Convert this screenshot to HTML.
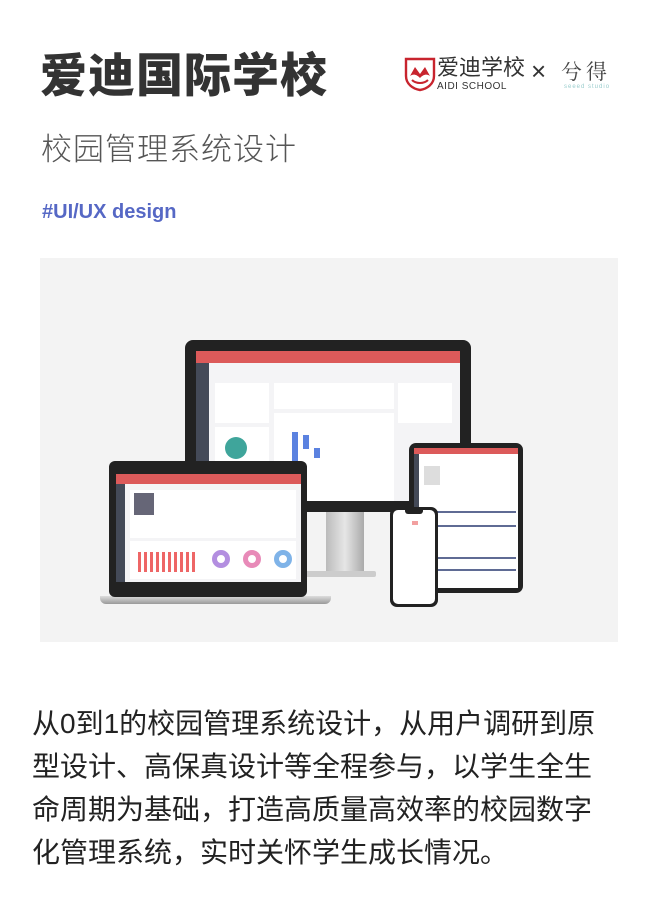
<!DOCTYPE html>
<html><head><meta charset="utf-8"><style>
*{margin:0;padding:0;box-sizing:border-box}
body{width:648px;height:900px;background:#fff;font-family:"Liberation Sans","Noto Sans CJK SC",sans-serif;position:relative;overflow:hidden;color:#333}
.a{position:absolute}
h1{position:absolute;left:40px;top:44px;font-size:47px;font-weight:900;color:#333;letter-spacing:1px;line-height:64px;white-space:nowrap}
.sub{left:41px;top:130px;font-size:31px;color:#555;line-height:40px;font-weight:300;white-space:nowrap;letter-spacing:1px}
.tag{left:42px;top:201px;font-size:20px;font-weight:700;color:#5668c5}
.para{left:32px;top:702px;width:610px;font-size:28px;line-height:43px;color:#222;white-space:nowrap}
.img{left:40px;top:258px;width:578px;height:384px;background:#f3f3f3}
.scr{background:#f4f4f6}
.red{background:#dc5a5a}
</style></head><body>
<h1>爱迪国际学校</h1>
<div class="a sub">校园管理系统设计</div>
<div class="a tag">#UI/UX design</div>

<svg class="a" style="left:404px;top:56px" width="32" height="36" viewBox="0 0 32 36">
<path d="M2 3h28v17c0 8-7 13-14 14C9 33 2 28 2 20z" fill="none" stroke="#c8242e" stroke-width="2.4"/>
<path d="M6 20l5-9 5 7 5-7 5 9c-3-2-6-2-10 2-4-4-7-4-10-2z" fill="#c8242e"/>
<path d="M8 24c4 4 12 4 16 0" stroke="#c8242e" stroke-width="2" fill="none"/>
</svg>
<div class="a" style="left:437px;top:55px;font-size:22px;color:#333;line-height:26px">爱迪学校</div>
<div class="a" style="left:437px;top:81px;font-size:10px;color:#333;letter-spacing:.5px">AIDI SCHOOL</div>
<div class="a" style="left:531px;top:56px;font-size:26px;color:#333;line-height:30px">×</div>
<div class="a" style="left:561px;top:56px;font-size:21px;color:#444;letter-spacing:4px;font-family:'Noto Serif CJK SC',serif">兮得</div>
<div class="a" style="left:564px;top:84px;font-size:6px;color:#9cc;letter-spacing:1px">seeed studio</div>

<div class="a img"></div>
<div class="a" style="left:326px;top:510px;width:38px;height:64px;background:linear-gradient(90deg,#bbb,#e6e6e6,#aaa)"></div>
<div class="a" style="left:300px;top:571px;width:76px;height:6px;background:#ccc;border-radius:2px"></div>
<div class="a" style="left:185px;top:340px;width:286px;height:172px;background:#222;border-radius:8px"></div>
<div class="a scr" style="left:196px;top:351px;width:264px;height:150px"></div>
<div class="a red" style="left:196px;top:351px;width:264px;height:12px"></div>
<div class="a" style="left:196px;top:363px;width:13px;height:138px;background:#444a58"></div>
<div class="a" style="left:215px;top:383px;width:54px;height:40px;background:#fff"></div>
<div class="a" style="left:274px;top:383px;width:120px;height:26px;background:#fff"></div>
<div class="a" style="left:398px;top:383px;width:54px;height:40px;background:#fff"></div>
<div class="a" style="left:274px;top:413px;width:120px;height:88px;background:#fff"></div>
<div class="a" style="left:215px;top:427px;width:54px;height:74px;background:#fff"></div>
<div class="a" style="left:225px;top:437px;width:22px;height:22px;border-radius:50%;background:#3fa59b"></div>
<div class="a" style="left:292px;top:432px;width:6px;height:30px;background:#5b82e0"></div>
<div class="a" style="left:303px;top:435px;width:6px;height:14px;background:#5b82e0"></div>
<div class="a" style="left:314px;top:448px;width:6px;height:10px;background:#5b82e0"></div>
<div class="a" style="left:100px;top:596px;width:231px;height:8px;background:linear-gradient(#ddd,#999);border-radius:0 0 6px 6px"></div>
<div class="a" style="left:109px;top:461px;width:198px;height:136px;background:#222;border-radius:6px"></div>
<div class="a scr" style="left:116px;top:474px;width:185px;height:108px"></div>
<div class="a red" style="left:116px;top:474px;width:185px;height:10px"></div>
<div class="a" style="left:116px;top:484px;width:9px;height:98px;background:#444a58"></div>
<div class="a" style="left:130px;top:490px;width:166px;height:48px;background:#fff"></div>
<div class="a" style="left:134px;top:493px;width:20px;height:22px;background:#667"></div>
<div class="a" style="left:130px;top:541px;width:166px;height:38px;background:#fff"></div>
<div class="a" style="left:138px;top:552px;width:60px;height:20px;background:repeating-linear-gradient(90deg,#e66 0 3px,transparent 3px 6px)"></div>
<div class="a" style="left:212px;top:550px;width:18px;height:18px;border-radius:50%;border:5px solid #b38ee0"></div>
<div class="a" style="left:243px;top:550px;width:18px;height:18px;border-radius:50%;border:5px solid #e88ab8"></div>
<div class="a" style="left:274px;top:550px;width:18px;height:18px;border-radius:50%;border:5px solid #7fb3e8"></div>
<div class="a" style="left:409px;top:443px;width:114px;height:150px;background:#222;border-radius:7px"></div>
<div class="a" style="left:414px;top:448px;width:104px;height:140px;background:#fff"></div>
<div class="a red" style="left:414px;top:448px;width:104px;height:6px"></div>
<div class="a" style="left:414px;top:454px;width:5px;height:134px;background:#444a58"></div>
<div class="a" style="left:424px;top:466px;width:16px;height:19px;background:#ddd"></div>
<div class="a" style="left:420px;top:511px;width:96px;height:2px;background:#5f6b94"></div>
<div class="a" style="left:420px;top:525px;width:96px;height:2px;background:#5f6b94"></div>
<div class="a" style="left:420px;top:557px;width:96px;height:2px;background:#5f6b94"></div>
<div class="a" style="left:420px;top:569px;width:96px;height:2px;background:#5f6b94"></div>
<div class="a" style="left:390px;top:507px;width:48px;height:100px;background:#222;border-radius:7px"></div>
<div class="a" style="left:393px;top:510px;width:42px;height:94px;background:#fff;border-radius:5px"></div>
<div class="a" style="left:405px;top:510px;width:18px;height:4px;background:#222;border-radius:0 0 3px 3px"></div>
<div class="a" style="left:412px;top:521px;width:6px;height:4px;background:#f2a0a0"></div>

<div class="a para">从0到1的校园管理系统设计，从用户调研到原<br>型设计、高保真设计等全程参与，以学生全生<br>命周期为基础，打造高质量高效率的校园数字<br>化管理系统，实时关怀学生成长情况。</div>
</body></html>
